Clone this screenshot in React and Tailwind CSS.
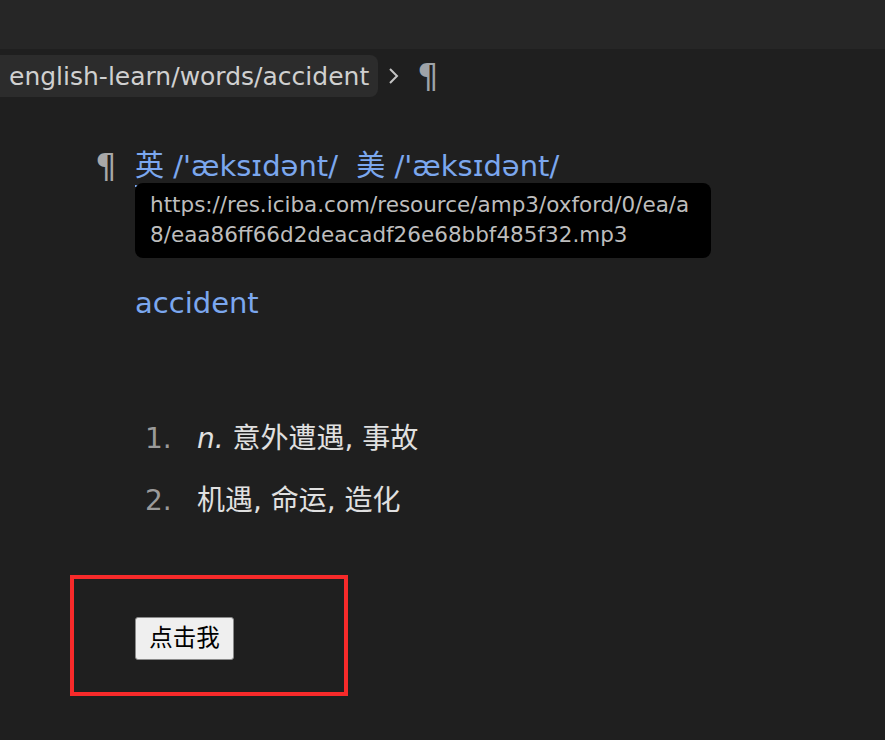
import React from "react";

const FONT = { fontFamily: '"DejaVu Sans", "Noto Sans CJK SC", sans-serif' };

function App() {
  return (
    <div className="w-[885px] h-[740px] bg-[#1f1f1f] overflow-hidden" style={FONT}>
      <div className="h-[49px] bg-[#262626]" />

      <div className="mt-[6px] flex items-center h-[42px]">
        <div className="h-[42px] w-[378px] bg-[#2c2c2c] rounded-r-[8px] flex items-center pl-[9px] text-[25px] text-[#d0d0d0] leading-none whitespace-nowrap">
          english-learn/words/accident
        </div>
        <span className="ml-[10px] leading-none">
          <svg width="12" height="18" viewBox="0 0 12 18" fill="none" stroke="#c4c4c4" strokeWidth="2">
            <path d="M2 2 L9 9 L2 16" />
          </svg>
        </span>
        <span className="ml-[17px] text-[#9ea3a8] text-[34px] leading-none">¶</span>
      </div>

      <div className="pl-[95px] pt-[51px]">
        <div className="relative flex items-center h-[36px]">
          <span className="w-[40px] text-[#a8a8a8] text-[34px] leading-none">¶</span>
          <span className="text-[29px] leading-[36px] text-[#7ba7ee] whitespace-pre">
            <span className="underline underline-offset-[9px] decoration-[2px]">英</span> /'æksɪdənt/  美 /'æksɪdənt/
          </span>
          <div className="absolute left-[40px] top-[35px] w-[576px] h-[75px] bg-black rounded-[8px] pl-[15px] pt-[7px] text-[21.5px] leading-[30px] text-[#bdbdbd] whitespace-nowrap">
            https://res.iciba.com/resource/amp3/oxford/0/ea/a
            <br />
            8/eaa86ff66d2deacadf26e68bbf485f32.mp3
          </div>
        </div>

        <div className="pl-[40px] mt-[101px] text-[29px] leading-[36px] text-[#7ba7ee]">accident</div>

        <ol className="mt-[100px] pl-[50px] text-[28px] leading-[36px]">
          <li className="flex">
            <span className="w-[52px] text-[#9a9a9a]">1.</span>
            <span className="text-[#e0e0e0]"><i>n.</i> 意外遭遇, 事故</span>
          </li>
          <li className="flex mt-[26px]">
            <span className="w-[52px] text-[#9a9a9a]">2.</span>
            <span className="text-[#e0e0e0]">机遇, 命运, 造化</span>
          </li>
        </ol>

        <div className="mt-[56px] ml-[-25px] w-[278px] h-[121px] border-[4px] border-[#f72a2a] pl-[61px] pt-[38px]">
          <button className="h-[43px] w-[99px] bg-[#efefef] border border-[#8a8a8a] rounded-[3px] text-[23.5px] text-black leading-none">
            点击我
          </button>
        </div>
      </div>
    </div>
  );
}

export default App;
